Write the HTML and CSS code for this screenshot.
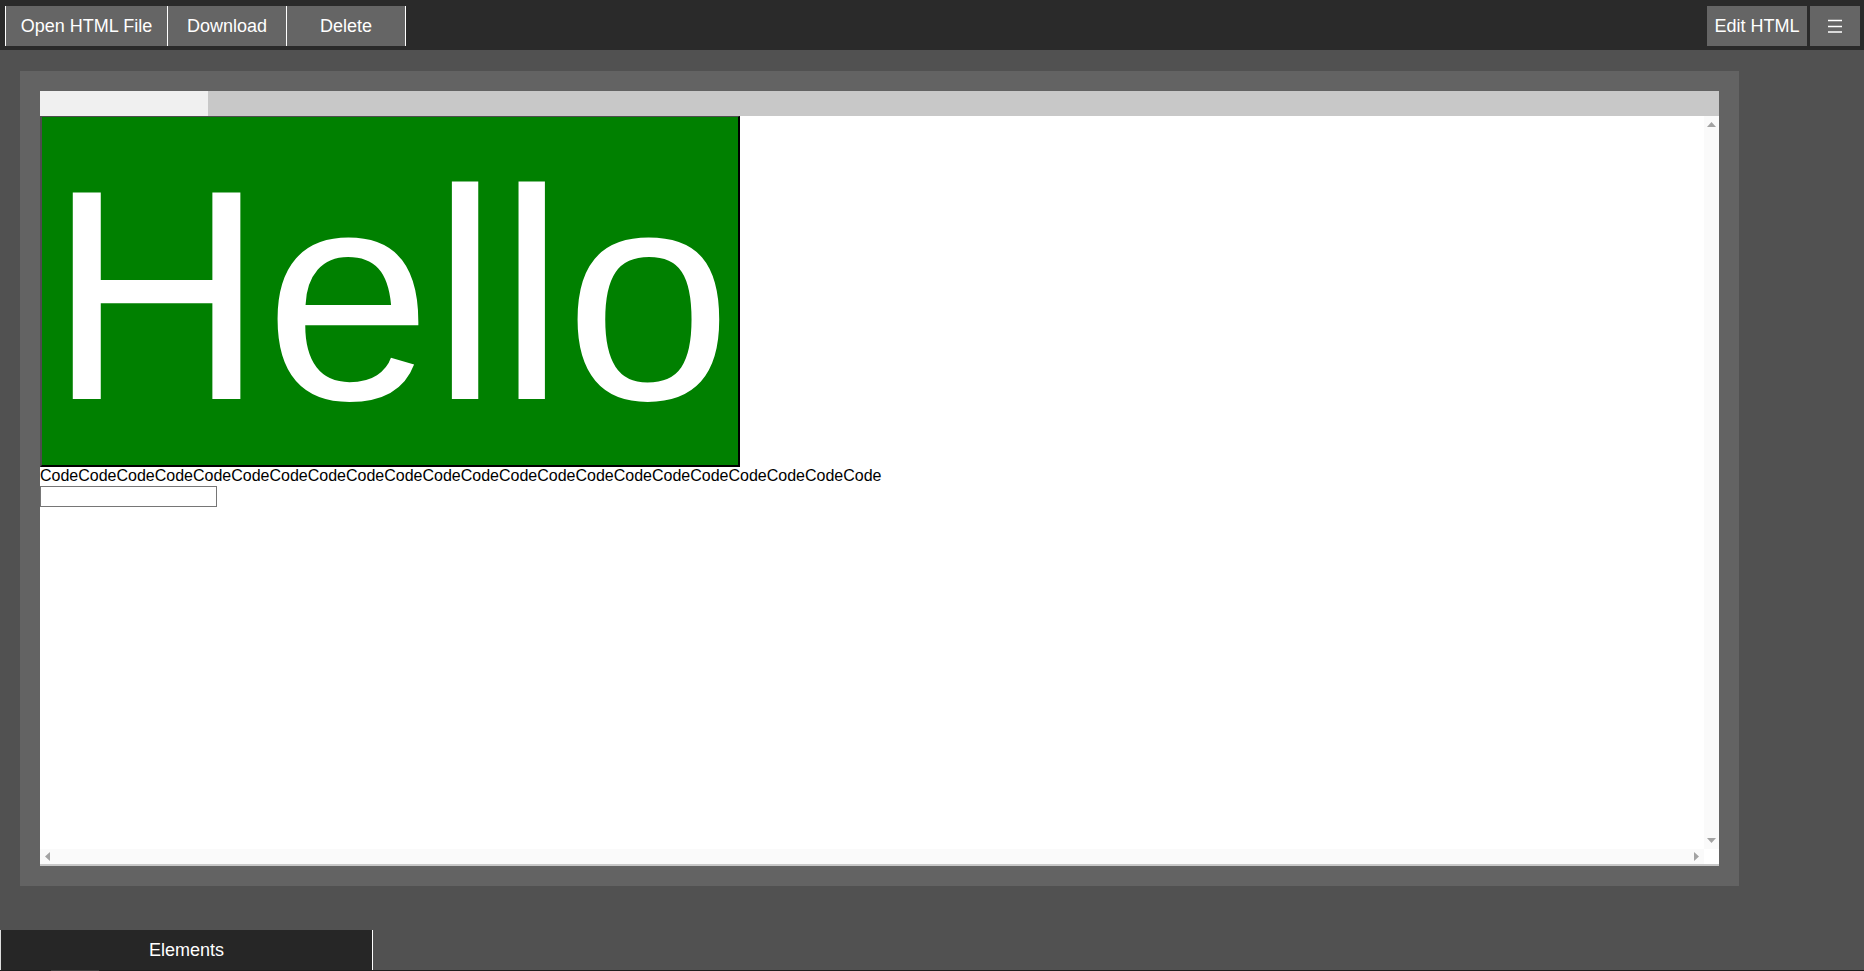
FILE: index.html
```html
<!DOCTYPE html>
<html>
<head>
<meta charset="utf-8">
<link rel="stylesheet" href="styles.css">
</head>
<body>
<div class="topbar">
  <div class="btn-group">
    <button class="tbtn open">Open HTML File</button>
    <button class="tbtn dl">Download</button>
    <button class="tbtn del">Delete</button>
  </div>
  <div class="right-group">
    <button class="rbtn edit">Edit HTML</button>
    <button class="rbtn menu" aria-label="menu">
      <svg width="14" height="14" viewBox="0 0 14 14"><path d="M0 1.5H14M0 7.5H14M0 13H14" stroke="#fff" stroke-width="1.5"/></svg>
    </button>
  </div>
</div>
<div class="main">
  <div class="panel">
    <div class="tabs"><div class="tab active"></div></div>
    <div class="frame">
      <div class="content">
        <div class="hello">Hello</div>
        <div class="code">CodeCodeCodeCodeCodeCodeCodeCodeCodeCodeCodeCodeCodeCodeCodeCodeCodeCodeCodeCodeCodeCode</div>
        <input class="field" type="text">
      </div>
      <div class="vscroll">
        <svg width="9" height="5" viewBox="0 0 9 5"><path d="M0 5L4.5 0L9 5Z" fill="#a3a3a3"/></svg>
        <svg width="9" height="5" viewBox="0 0 9 5"><path d="M0 0L4.5 5L9 0Z" fill="#a3a3a3"/></svg>
      </div>
      <div class="hscroll">
        <svg width="5" height="9" viewBox="0 0 5 9"><path d="M5 0L0 4.5L5 9Z" fill="#a3a3a3"/></svg>
        <svg width="5" height="9" viewBox="0 0 5 9"><path d="M0 0L5 4.5L0 9Z" fill="#a3a3a3"/></svg>
      </div>
      <div class="corner"></div>
    </div>
  </div>
</div>
<div class="bottom">
  <div class="btab">Elements</div>
</div>
<div class="edge"><div class="edge-seg"></div></div>
</body>
</html>
```
FILE: styles.css
```css
html, body {
  margin: 0;
  padding: 0;
  height: 100%;
  overflow: hidden;
}
body {
  background: #515151;
  font-family: "Liberation Sans", Arial, sans-serif;
  display: flex;
  flex-direction: column;
}
.topbar {
  height: 50px;
  background: #2a2a2a;
  display: flex;
  justify-content: space-between;
  align-items: flex-start;
  padding: 6px 4px 0 5px;
  box-sizing: border-box;
  flex: none;
}
.btn-group, .right-group {
  display: flex;
}
.tbtn, .rbtn {
  height: 40px;
  background: #656565;
  color: #fff;
  font-family: "Liberation Sans", Arial, sans-serif;
  font-size: 18px;
  border: none;
  margin: 0;
  padding: 0;
  cursor: pointer;
}
.tbtn {
  border-left: 1px solid #fff;
}
.tbtn.open { width: 162px; }
.tbtn.dl { width: 119px; }
.tbtn.del { width: 120px; border-right: 1px solid #fff; }
.right-group { gap: 3px; }
.rbtn.edit { width: 100px; }
.rbtn.menu {
  width: 50px;
  display: flex;
  align-items: center;
  justify-content: center;
}
.main {
  flex: 1;
  padding: 21px 0 0 20px;
  box-sizing: border-box;
}
.panel {
  width: 1719px;
  background: #636363;
  padding: 20px;
  box-sizing: border-box;
}
.tabs {
  height: 25px;
  background: #c8c8c8;
  display: flex;
}
.tab.active {
  width: 168px;
  background: #f0f0f0;
}
.frame {
  height: 750px;
  background: #fff;
  border-bottom: 2px solid #c8c8c8;
  box-sizing: border-box;
  display: grid;
  grid-template-columns: 1fr 15px;
  grid-template-rows: 1fr 15px;
}
.content {
  overflow: hidden;
  min-width: 0;
  min-height: 0;
}
.vscroll {
  background: #fafafa;
  display: flex;
  flex-direction: column;
  justify-content: space-between;
  align-items: center;
  padding: 6px 0;
}
.hscroll {
  background: #fafafa;
  display: flex;
  justify-content: space-between;
  align-items: center;
  padding: 0 5px;
}
.corner {
  background: #fff;
}
.hello {
  width: 700px;
  height: 351px;
  box-sizing: border-box;
  background: #008000;
  color: #fff;
  font-size: 300px;
  line-height: 345px;
  padding-top: 6px;
  text-align: center;
  border-style: solid;
  border-width: 1px 2px 2px 2px;
  border-color: #4d4d4d #000 #000 #4d4d4d;
}
.code {
  font-size: 16px;
  line-height: 18px;
  color: #000;
  white-space: nowrap;
}
.field {
  display: block;
  width: 177px;
  height: 21px;
  box-sizing: border-box;
  margin: 1px 0 0 0;
  border: 1px solid #767676;
  padding: 1px 2px;
  font-size: 13px;
}
.bottom {
  height: 40px;
  flex: none;
  display: flex;
}
.btab {
  width: 371px;
  background: #262626;
  color: #fff;
  font-size: 18px;
  border-left: 1px solid #ddd;
  border-right: 1px solid #fff;
  display: flex;
  align-items: center;
  justify-content: center;
}
.edge {
  height: 1px;
  flex: none;
  background: #1e1e1e;
  display: flex;
  padding-left: 51px;
}
.edge-seg {
  width: 48px;
  background: #3c3c3c;
}
```
